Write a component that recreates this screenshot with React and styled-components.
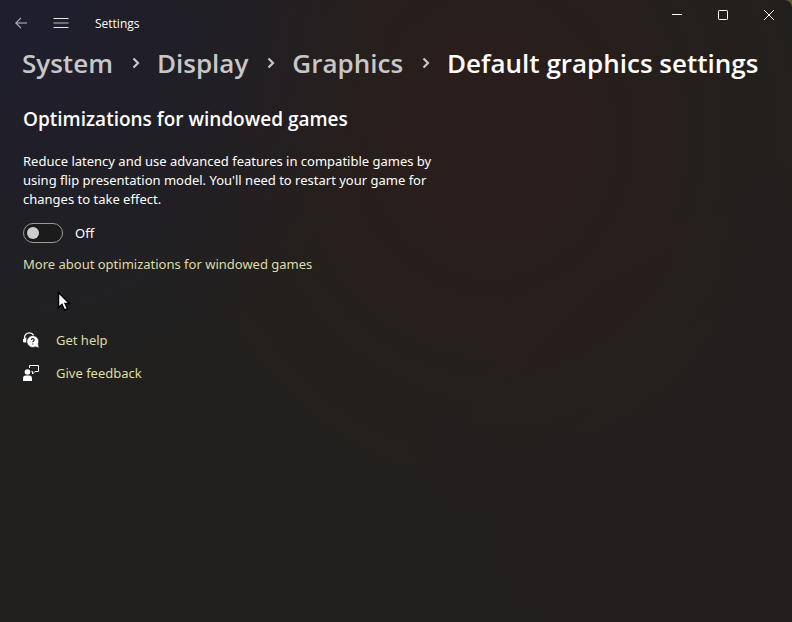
import React, { useState } from "react";
import styled, { createGlobalStyle } from "styled-components";

const GlobalStyle = createGlobalStyle`
  * {
    box-sizing: border-box;
  }

  body {
    margin: 0;
    background-color: #5a5a2c;
    font-family: "Open Sans", "Noto Sans", sans-serif;
    color: #ffffff;
  }

  button {
    padding: 0;
    border: none;
    background: none;
    color: inherit;
    font: inherit;
  }
`;

const Window = styled.div`
  position: relative;
  min-height: 100vh;
  border-radius: 0 8px 0 0;
  background-color: #21201e;
  background-image:
    radial-gradient(ellipse 50% 65% at 0% 0%, #1f1e2d 10%, rgba(31, 30, 45, 0) 100%),
    radial-gradient(ellipse 45% 65% at 62% 22%, #291e1b 20%, rgba(41, 30, 27, 0) 100%),
    radial-gradient(ellipse 50% 60% at 100% 85%, #241e1f 20%, rgba(36, 30, 31, 0) 100%);
`;

const TitleBar = styled.header`
  display: flex;
  justify-content: space-between;
  align-items: flex-start;
  height: 45px;
`;

const NavGroup = styled.div`
  display: flex;
  align-items: center;
  height: 46px;
`;

const NavButton = styled.button`
  display: flex;
  align-items: center;
  justify-content: center;
  width: 40px;
  height: 36px;
  color: ${(props) => (props.$dim ? "#b4b3b8" : "#e4e4e6")};

  &:first-child {
    margin-left: 1px;
  }
`;

const AppName = styled.span`
  margin-left: 14px;
  padding-top: 2px;
  font-size: 12px;
  line-height: 16px;
`;

const CaptionGroup = styled.div`
  display: flex;
`;

const CaptionButton = styled.button`
  display: flex;
  align-items: center;
  justify-content: center;
  width: 46px;
  height: 30px;

  &:hover {
    background-color: rgba(255, 255, 255, 0.08);
  }
`;

const Breadcrumb = styled.nav`
  padding: 0 22px;

  ol {
    display: flex;
    flex-wrap: wrap;
    margin: 0;
    padding: 0;
    list-style: none;
  }

  li {
    display: flex;
    align-items: center;
    font-size: 26px;
    font-weight: 600;
    line-height: 36px;
  }

  svg {
    margin: 0 16px;
  }
`;

const Crumb = styled.a`
  color: #c8c7c8;
  text-decoration: none;
`;

const CurrentPage = styled.h1`
  margin: 0;
  font-size: inherit;
  font-weight: inherit;
`;

const Content = styled.main`
  padding: 25px 23px;
  font-family: "Noto Sans", sans-serif;
  font-size: 13px;
  line-height: 19px;
`;

const SectionTitle = styled.h2`
  margin: 0 0 20px;
  font-family: "Open Sans", sans-serif;
  font-size: 19px;
  font-weight: 600;
  line-height: 26px;
`;

const Description = styled.p`
  max-width: 424px;
  margin: 0;
`;

const ToggleRow = styled.label`
  display: flex;
  align-items: center;
  gap: 12px;
  margin-top: 14px;
  width: fit-content;
  line-height: 20px;
`;

const Toggle = styled.input`
  appearance: none;
  display: flex;
  align-items: center;
  width: 40px;
  height: 20px;
  margin: 0;
  padding: 0 3px;
  border: 1px solid #9b9a9a;
  border-radius: 10px;
  background-color: #1c1b1c;

  &::before {
    content: "";
    width: 12px;
    height: 12px;
    border-radius: 50%;
    background-color: #cecdce;
  }

  &:checked {
    justify-content: flex-end;
    border-color: #e6e3a8;
    background-color: #e6e3a8;
  }

  &:checked::before {
    background-color: #1c1b1c;
  }
`;

const TextLink = styled.a`
  color: #dfdca6;
  line-height: 20px;
  text-decoration: none;

  &:hover {
    text-decoration: underline;
  }
`;

const MoreLink = styled(TextLink)`
  display: block;
  width: fit-content;
  margin-top: 11px;
`;

const SupportList = styled.ul`
  display: grid;
  gap: 13px;
  margin: 56px 0 0;
  padding: 0;
  list-style: none;
`;

const SupportItem = styled.li`
  display: flex;
  align-items: center;
  gap: 17px;
`;

const Pointer = styled.svg`
  position: absolute;
  left: 57px;
  top: 291px;
  pointer-events: none;
`;

function BackIcon() {
  return (
    <svg width="12" height="12" viewBox="0 0 12 12" fill="none" stroke="currentColor">
      <path d="M12 6H1" strokeWidth="1.4" strokeOpacity=".8" />
      <path d="M6 .8.8 6 6 11.2" strokeWidth="1.2" />
    </svg>
  );
}

function MenuIcon() {
  return (
    <svg width="16" height="12" viewBox="0 0 16 12" fill="none" stroke="currentColor">
      <path d="M.5 1.5h15M.5 10.5h15" />
      <path d="M.5 6h15" strokeOpacity=".8" />
    </svg>
  );
}

function ChevronIcon() {
  return (
    <svg width="12" height="14" viewBox="0 0 12 14" fill="none" stroke="#c8c7c8" strokeWidth="2.2">
      <path d="m4.500 2.500 4.500 4.500-4.500 4.500" />
    </svg>
  );
}

function HelpIcon() {
  return (
    <svg width="16" height="16" viewBox="0 0 16 16">
      <path
        d="M1.500 7.500V5.800C1.500 2.800 3.600.9 6.300.9c2 0 3.500.9 4.400 2.400"
        fill="none"
        stroke="#fff"
        strokeWidth="1.300"
      />
      <path d="M0 7h1.500l1.800-2v5.500H1.400C.5 10.500 0 9.800 0 9Z" fill="#fff" />
      <path d="M9.700 3.700a5.800 5.800 0 1 0 2.600 11L16 15.800l-1-3.800A5.800 5.800 0 0 0 9.700 3.700Z" fill="#fff" stroke="#21201e" strokeWidth=".4" />
      <path d="M8.300 8c0-1.900 2.900-1.900 2.900 0 0 1-1.400 1.100-1.400 2.200M9.800 11.400v1.100" fill="none" stroke="#232020" strokeWidth="1.100" />
    </svg>
  );
}

function FeedbackIcon() {
  return (
    <svg width="16" height="16" viewBox="0 0 16 16">
      <circle cx="4.500" cy="7" r="2.800" fill="#fff" />
      <path d="M0 16v-2.500C0 11.600 1 10.500 2.700 10.500h3.600C8 10.500 9 11.600 9 13.500V16Z" fill="#fff" />
      <path d="M6.500 3V.5h9v6H12L9.500 9V6.500H8.500" fill="none" stroke="#fff" />
    </svg>
  );
}

const crumbs = ["System", "Display", "Graphics"];

const supportLinks = [
  { label: "Get help", icon: <HelpIcon /> },
  { label: "Give feedback", icon: <FeedbackIcon /> },
];

function App() {
  const [enabled, setEnabled] = useState(false);

  return (
    <>
      <GlobalStyle />
      <Window>
        <TitleBar>
          <NavGroup>
            <NavButton $dim aria-label="Back">
              <BackIcon />
            </NavButton>
            <NavButton aria-label="Open navigation">
              <MenuIcon />
            </NavButton>
            <AppName>Settings</AppName>
          </NavGroup>
          <CaptionGroup>
            <CaptionButton aria-label="Minimize">
              <svg width="10" height="10" viewBox="0 0 10 10" stroke="#fff">
                <path d="M0 4.500h10" />
              </svg>
            </CaptionButton>
            <CaptionButton aria-label="Maximize">
              <svg width="10" height="10" viewBox="0 0 10 10" fill="none" stroke="#fff">
                <rect x=".5" y=".5" width="9" height="9" rx=".7" />
              </svg>
            </CaptionButton>
            <CaptionButton aria-label="Close">
              <svg width="10" height="10" viewBox="0 0 10 10" stroke="#fff">
                <path d="m0 0 10 10M10 0 0 10" />
              </svg>
            </CaptionButton>
          </CaptionGroup>
        </TitleBar>

        <Breadcrumb aria-label="Breadcrumb">
          <ol>
            {crumbs.map((name) => (
              <li key={name}>
                <Crumb href="#">{name}</Crumb>
                <ChevronIcon />
              </li>
            ))}
            <li>
              <CurrentPage>Default graphics settings</CurrentPage>
            </li>
          </ol>
        </Breadcrumb>

        <Content>
          <SectionTitle>Optimizations for windowed games</SectionTitle>
          <Description>
            Reduce latency and use advanced features in compatible games by using flip
            presentation model. You'll need to restart your game for changes to take effect.
          </Description>
          <ToggleRow>
            <Toggle
              type="checkbox"
              role="switch"
              checked={enabled}
              onChange={(e) => setEnabled(e.target.checked)}
            />
            {enabled ? "On" : "Off"}
          </ToggleRow>
          <MoreLink href="#">More about optimizations for windowed games</MoreLink>

          <SupportList>
            {supportLinks.map((link) => (
              <SupportItem key={link.label}>
                {link.icon}
                <TextLink href="#">{link.label}</TextLink>
              </SupportItem>
            ))}
          </SupportList>
        </Content>

        <Pointer width="14" height="21" viewBox="0 0 14 21">
          <path d="M1.500 1.500v15l3.500-3 2.500 5.500 3-1.300-2.400-5.200h4.400Z" fill="#fff" stroke="#000" strokeWidth="1.500" />
        </Pointer>
      </Window>
    </>
  );
}

export default App;
